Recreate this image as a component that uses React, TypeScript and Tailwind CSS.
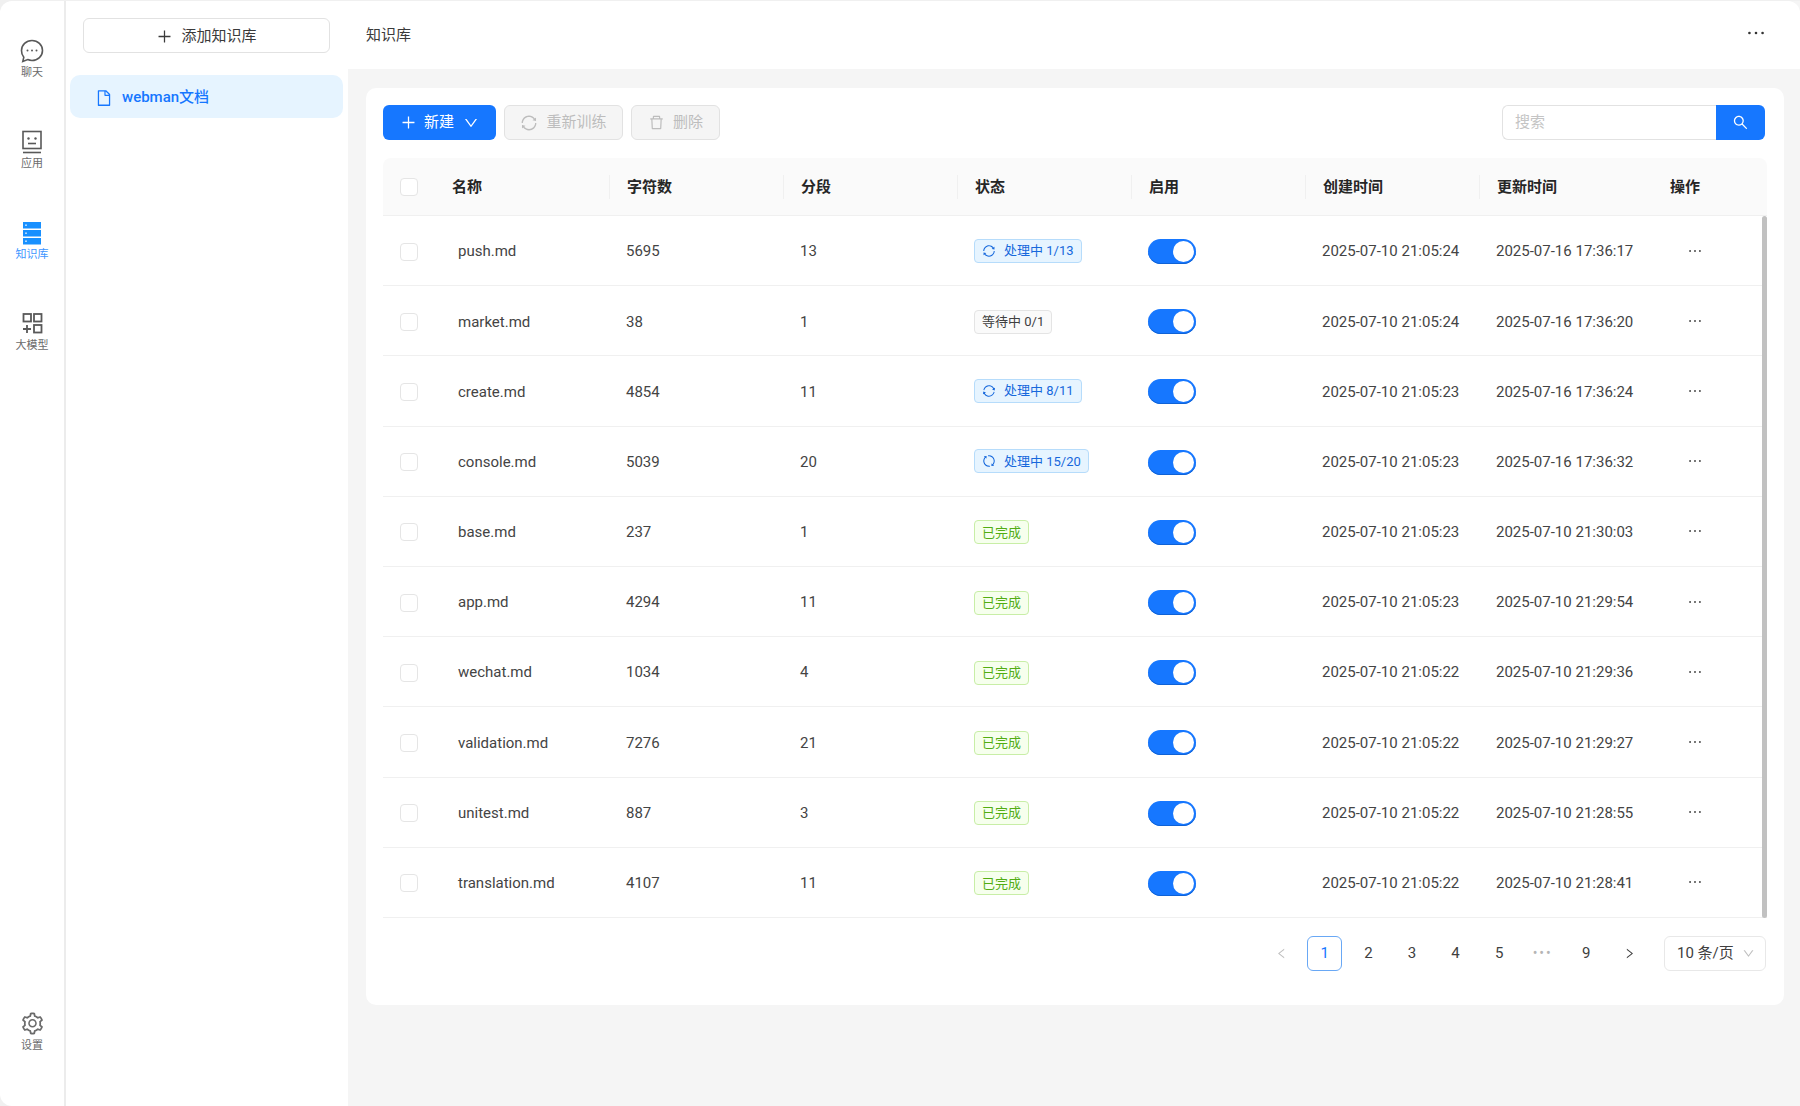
import type { ReactNode } from "react";
import {
  AiOutlineDelete,
  AiOutlineDown,
  AiOutlineEllipsis,
  AiOutlineFile,
  AiOutlineLeft,
  AiOutlinePlus,
  AiOutlineRight,
  AiOutlineSearch,
  AiOutlineSetting,
  AiOutlineSync,
} from "react-icons/ai";

type Status = { kind: "run" | "wait" | "done"; text: string; spin?: string };

const done: Status = { kind: "done", text: "已完成" };

const rows: { name: string; chars: number; seg: number; status: Status; created: string; updated: string }[] = [
  { name: "push.md", chars: 5695, seg: 13, status: { kind: "run", text: "处理中 1/13", spin: "rotate-0" }, created: "2025-07-10 21:05:24", updated: "2025-07-16 17:36:17" },
  { name: "market.md", chars: 38, seg: 1, status: { kind: "wait", text: "等待中 0/1" }, created: "2025-07-10 21:05:24", updated: "2025-07-16 17:36:20" },
  { name: "create.md", chars: 4854, seg: 11, status: { kind: "run", text: "处理中 8/11", spin: "rotate-[10deg]" }, created: "2025-07-10 21:05:23", updated: "2025-07-16 17:36:24" },
  { name: "console.md", chars: 5039, seg: 20, status: { kind: "run", text: "处理中 15/20", spin: "rotate-[80deg]" }, created: "2025-07-10 21:05:23", updated: "2025-07-16 17:36:32" },
  { name: "base.md", chars: 237, seg: 1, status: done, created: "2025-07-10 21:05:23", updated: "2025-07-10 21:30:03" },
  { name: "app.md", chars: 4294, seg: 11, status: done, created: "2025-07-10 21:05:23", updated: "2025-07-10 21:29:54" },
  { name: "wechat.md", chars: 1034, seg: 4, status: done, created: "2025-07-10 21:05:22", updated: "2025-07-10 21:29:36" },
  { name: "validation.md", chars: 7276, seg: 21, status: done, created: "2025-07-10 21:05:22", updated: "2025-07-10 21:29:27" },
  { name: "unitest.md", chars: 887, seg: 3, status: done, created: "2025-07-10 21:05:22", updated: "2025-07-10 21:28:55" },
  { name: "translation.md", chars: 4107, seg: 11, status: done, created: "2025-07-10 21:05:22", updated: "2025-07-10 21:28:41" },
];

const headers = ["名称", "字符数", "分段", "状态", "启用", "创建时间", "更新时间", "操作"];

function ChatIcon() {
  return (
    <svg width="24" height="24" viewBox="0 0 24 24" fill="none" stroke="#595959" strokeWidth="1.6">
      <path d="M12 1.500c5.800 0 10.500 4.400 10.500 10s-4.700 10-10.500 10c-1.500 0-3-.3-4.300-.9l-4.900 1.900 1-4.300a10 10 0 0 1-2.300-6.700c0-5.600 4.700-10 10.500-10z" />
      <circle cx="7.500" cy="11.500" r="1" fill="#595959" stroke="none" />
      <circle cx="12" cy="11.500" r="1" fill="#595959" stroke="none" />
      <circle cx="16.500" cy="11.500" r="1" fill="#595959" stroke="none" />
    </svg>
  );
}

function AppIcon() {
  return (
    <svg width="24" height="24" viewBox="0 0 24 24" fill="none" stroke="#595959" strokeWidth="1.6">
      <rect x="3" y="1.500" width="18" height="17" />
      <path d="M3 22.500h18" />
      <path d="M8 13.500h8" />
      <circle cx="8.500" cy="8.500" r="1.200" fill="#595959" stroke="none" />
      <circle cx="15.500" cy="8.500" r="1.200" fill="#595959" stroke="none" />
    </svg>
  );
}

function KnowledgeIcon() {
  return (
    <svg width="24" height="24" viewBox="0 0 24 24">
      <rect x="3" y="1" width="18" height="6.500" fill="#1890ff" />
      <rect x="3" y="9" width="18" height="6.500" fill="#1890ff" />
      <rect x="3" y="17" width="18" height="6.500" fill="#1890ff" />
      <circle cx="6" cy="4.200" r="0.900" fill="#cfe8ff" />
      <circle cx="6" cy="12.200" r="0.900" fill="#cfe8ff" />
      <circle cx="6" cy="20.200" r="0.900" fill="#cfe8ff" />
    </svg>
  );
}

function ModelIcon() {
  return (
    <svg width="24" height="24" viewBox="0 0 24 24" fill="none" stroke="#595959" strokeWidth="1.800">
      <rect x="3.500" y="2" width="7.500" height="7.500" />
      <rect x="14" y="2" width="7.500" height="7.500" />
      <rect x="14" y="13" width="7.500" height="7.500" />
      <path d="M7 13v8M3 17h8" />
    </svg>
  );
}

function NavItem({ icon, label, active }: { icon: ReactNode; label: string; active?: boolean }) {
  return (
    <div className={`flex h-[91px] flex-col items-center justify-center ${active ? "text-[#4096ff]" : "text-[#6b6b6b]"}`}>
      {icon}
      <span className="mt-[2px] text-[11px] leading-[16px]">{label}</span>
    </div>
  );
}

function Checkbox() {
  return <span className="block h-[18px] w-[18px] rounded-[4px] border border-[#e5e5e5] bg-white" />;
}

function Tag({ status }: { status: Status }) {
  if (status.kind === "run") {
    return (
      <span className="inline-flex h-[24px] items-center rounded-[4px] border border-[#b6dcfb] bg-[#e6f4ff] pl-[7px] pr-[7px] text-[13px] text-[#1668dc]">
        <AiOutlineSync className={`mr-[8px] text-[14px] ${status.spin}`} />
        {status.text}
      </span>
    );
  }
  if (status.kind === "wait") {
    return (
      <span className="inline-flex h-[24px] items-center rounded-[4px] border border-[#e4e4e4] bg-[#fafafa] px-[7px] text-[13px] text-[#404040]">
        {status.text}
      </span>
    );
  }
  return (
    <span className="inline-flex h-[24px] items-center rounded-[4px] border border-[#c8eea6] bg-[#f6ffed] px-[7px] text-[13px] text-[#52ad14]">
      {status.text}
    </span>
  );
}

function Toggle() {
  return (
    <span className="flex h-[25px] w-[48px] items-center justify-end rounded-full bg-[#1677ff] pr-[2px] shadow-[inset_0_-1px_0_#0f62d6]">
      <span className="h-[21px] w-[21px] rounded-full bg-white" />
    </span>
  );
}

function PageBtn({ children, active, muted }: { children: ReactNode; active?: boolean; muted?: boolean }) {
  return (
    <span
      className={`flex h-[35px] w-[35px] items-center justify-center rounded-[6px] text-[15px] ${
        active ? "border border-[#69a8f5] text-[#1677ff]" : muted ? "text-[#bfbfbf]" : "text-[#404040]"
      }`}
    >
      {children}
    </span>
  );
}

export default function App() {
  return (
    <div
      className="flex h-[1106px] w-[1800px] overflow-hidden bg-[#f0f0f0] text-[#444444]"
      style={{ fontFamily: 'Roboto, "Noto Sans CJK SC", sans-serif' }}
    >
      {/* icon rail */}
      <aside className="mt-px flex w-[65px] shrink-0 flex-col rounded-l-[12px] border-r border-[#ececec] bg-white pt-[13px]">
        <NavItem icon={<ChatIcon />} label="聊天" />
        <NavItem icon={<AppIcon />} label="应用" />
        <NavItem icon={<KnowledgeIcon />} label="知识库" active />
        <NavItem icon={<ModelIcon />} label="大模型" />
        <div className="mt-auto mb-[52px]">
          <div className="flex flex-col items-center text-[#6b6b6b]">
            <AiOutlineSetting className="text-[25px]" />
            <span className="mt-[2px] text-[11px] leading-[16px]">设置</span>
          </div>
        </div>
      </aside>

      {/* knowledge list */}
      <div className="mt-px flex w-[283px] shrink-0 flex-col border-l border-[#ececec] bg-white pl-[4px] pr-[5px] pt-[17px]">
        <button className="mx-[13px] flex h-[35px] items-center justify-center rounded-[6px] border border-[#e2e2e2] bg-white pt-px text-[15px] text-[#3a3a3a]">
          <AiOutlinePlus className="mr-[8px] text-[17px]" />
          添加知识库
        </button>
        <div className="mt-[22px] flex h-[43px] items-center rounded-[10px] bg-[#e6f4ff] pl-[25px] pt-[2px] text-[15px] font-medium text-[#1677ff]">
          <AiOutlineFile className="mr-[9px] text-[18px]" />
          webman文档
        </div>
      </div>

      {/* main */}
      <main className="mt-px flex min-w-0 flex-1 flex-col bg-[#f5f5f5]">
        <header className="flex h-[68px] shrink-0 items-center justify-between rounded-tr-[12px] bg-white pl-[18px] pr-[32px] text-[15px] text-[#3a3a3a]">
          <span className="pt-px">知识库</span>
          <AiOutlineEllipsis className="-mt-[4px] text-[24px] text-[#333]" />
        </header>

        <section className="mx-[18px] mr-[16px] mt-[19px] h-[917px] rounded-[10px] bg-white px-[17px] pt-[17px]">
          <div className="flex h-[35px] items-center">
            <button className="flex h-[35px] w-[113px] items-center justify-center rounded-[6px] bg-[#1677ff] text-[15px] text-white">
              <AiOutlinePlus className="mr-[7px] text-[17px]" />
              新建
              <AiOutlineDown className="ml-[9px] text-[16px]" />
            </button>
            <button className="ml-[8px] flex h-[35px] w-[119px] items-center justify-center rounded-[6px] border border-[#e2e2e2] bg-[#f5f5f5] text-[15px] text-[#bdbdbd]">
              <AiOutlineSync className="mr-[8px] text-[18px]" />
              重新训练
            </button>
            <button className="ml-[8px] flex h-[35px] w-[89px] items-center justify-center rounded-[6px] border border-[#e2e2e2] bg-[#f5f5f5] text-[15px] text-[#bdbdbd]">
              <AiOutlineDelete className="mr-[8px] text-[17px]" />
              删除
            </button>
            <div className="ml-auto mr-[2px] flex h-[35px] w-[263px]">
              <div className="flex flex-1 items-center rounded-l-[6px] border border-r-0 border-[#e2e2e2] pl-[12px] text-[15px] text-[#c4c4c4]">
                搜索
              </div>
              <span className="flex w-[49px] items-center justify-center rounded-r-[6px] bg-[#1677ff] text-white">
                <AiOutlineSearch className="text-[17px]" />
              </span>
            </div>
          </div>

          <div className="relative mt-[18px]">
            <div className="grid h-[58px] grid-cols-[52px_repeat(7,174px)_113px] items-center rounded-t-[8px] border-b border-[#f0f0f0] bg-[#fafafa] text-[15px] font-semibold text-[#262626]">
              <span className="flex justify-center">
                <Checkbox />
              </span>
              {headers.map((h, i) => (
                <span
                  key={h}
                  className={`flex h-[24px] items-center pl-[17px] pt-[2px] ${i > 0 && i < 7 ? "border-l border-[#f0f0f0]" : ""}`}
                >
                  {h}
                </span>
              ))}
            </div>

            {rows.map((r) => (
              <div
                key={r.name}
                className="grid h-[70.2px] grid-cols-[52px_repeat(7,174px)_113px] items-center border-b border-[#f0f0f0] pt-[2px] text-[15px]"
              >
                <span className="flex justify-center">
                  <Checkbox />
                </span>
                <span className="pl-[23px]">{r.name}</span>
                <span className="pl-[17px]">{r.chars}</span>
                <span className="pl-[17px]">{r.seg}</span>
                <span className="pl-[17px]">
                  <Tag status={r.status} />
                </span>
                <span className="pl-[17px]">
                  <Toggle />
                </span>
                <span className="pl-[17px]">{r.created}</span>
                <span className="pl-[17px]">{r.updated}</span>
                <span className="pl-[33px]">
                  <AiOutlineEllipsis className="-mt-[2px] text-[18px] text-[#4a4a4a]" />
                </span>
              </div>
            ))}

            <span className="absolute right-0 top-[58px] h-[702px] w-[5px] rounded-full bg-[#c1c1c1]" />
          </div>

          <div className="mr-px mt-[18px] flex h-[35px] items-center justify-end gap-[8.600px]">
            <PageBtn muted>
              <AiOutlineLeft className="text-[13px]" />
            </PageBtn>
            <PageBtn active>1</PageBtn>
            <PageBtn>2</PageBtn>
            <PageBtn>3</PageBtn>
            <PageBtn>4</PageBtn>
            <PageBtn>5</PageBtn>
            <PageBtn muted>
              <span className="text-[14px] tracking-[2px] text-[#b5b5b5]">•••</span>
            </PageBtn>
            <PageBtn>9</PageBtn>
            <PageBtn>
              <AiOutlineRight className="text-[13px]" />
            </PageBtn>
            <span className="ml-[8px] flex h-[35px] w-[102px] items-center justify-between rounded-[6px] border border-[#e8e8e8] pl-[12px] pr-[10px] text-[15px] text-[#404040]">
              10 条/页
              <AiOutlineDown className="text-[13px] text-[#bfbfbf]" />
            </span>
          </div>
        </section>
      </main>
    </div>
  );
}
